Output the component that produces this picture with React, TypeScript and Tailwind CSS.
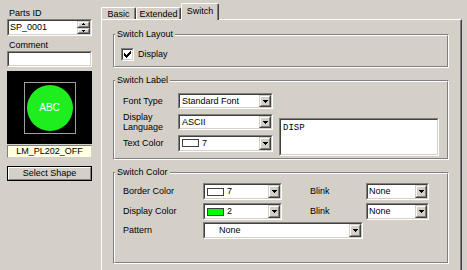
import React from "react";

const SUNK_OUT = "border border-t-[#808080] border-l-[#808080] border-r-white border-b-white";
const SUNK_IN = "border border-t-[#404040] border-l-[#404040] border-r-[#d4d0c8] border-b-[#d4d0c8]";
const RAISE_OUT = "border border-t-[#d4d0c8] border-l-[#d4d0c8] border-r-[#404040] border-b-[#404040]";
const RAISE_IN = "border border-t-white border-l-white border-r-[#808080] border-b-[#808080]";

function DownArrow() {
  return (
    <svg width="5" height="3" viewBox="0 0 5 3" shapeRendering="crispEdges">
      <rect x="0" y="0" width="5" height="1" fill="#000" />
      <rect x="1" y="1" width="3" height="1" fill="#000" />
      <rect x="2" y="2" width="1" height="1" fill="#000" />
    </svg>
  );
}

function UpArrowSmall() {
  return (
    <svg width="3" height="2" viewBox="0 0 3 2" shapeRendering="crispEdges">
      <rect x="1" y="0" width="1" height="1" fill="#000" />
      <rect x="0" y="1" width="3" height="1" fill="#000" />
    </svg>
  );
}
function DownArrowSmall() {
  return (
    <svg width="3" height="2" viewBox="0 0 3 2" shapeRendering="crispEdges">
      <rect x="0" y="0" width="3" height="1" fill="#000" />
      <rect x="1" y="1" width="1" height="1" fill="#000" />
    </svg>
  );
}

function ArrowButton() {
  return (
    <div className={`${RAISE_OUT} w-[12px] h-full bg-[#d4d0c8] shrink-0`}>
      <div className={`${RAISE_IN} h-full flex items-center justify-center`}>
        <DownArrow />
      </div>
    </div>
  );
}

function Combo({ className, children }: { className: string; children: React.ReactNode }) {
  return (
    <div className={`${SUNK_OUT} ${className} shrink-0`}>
      <div className={`${SUNK_IN} h-full flex bg-white`}>
        <div className="flex-1 flex items-center overflow-hidden whitespace-nowrap">{children}</div>
        <ArrowButton />
      </div>
    </div>
  );
}

function Swatch({ color }: { color: string }) {
  return (
    <span
      className={`ml-[2px] w-[17px] h-[8px] border border-[#404040] shrink-0 ${color === "green" ? "bg-[#00ff00]" : "bg-white"}`}
    />
  );
}

function Group({ title, className, children }: { title: string; className: string; children: React.ReactNode }) {
  return (
    <div className={`relative border border-t-[#808080] border-l-[#808080] border-r-white border-b-white ${className}`}>
      <div className="h-full border border-t-white border-l-white border-r-[#808080] border-b-[#808080]">{children}</div>
      <span className="absolute left-[1px] -top-[6px] px-[2px] bg-[#d4d0c8] leading-[11px]">{title}</span>
    </div>
  );
}

function Checkbox() {
  return (
    <div className={`${SUNK_OUT} w-[13px] h-[13px] shrink-0`}>
      <div className={`${SUNK_IN} h-full bg-white flex items-center justify-center`}>
        <svg width="7" height="7" viewBox="0 0 7 7" shapeRendering="crispEdges">
          <rect x="0" y="2" width="1" height="3" fill="#000" />
          <rect x="1" y="3" width="1" height="3" fill="#000" />
          <rect x="2" y="4" width="1" height="3" fill="#000" />
          <rect x="3" y="3" width="1" height="3" fill="#000" />
          <rect x="4" y="2" width="1" height="3" fill="#000" />
          <rect x="5" y="1" width="1" height="3" fill="#000" />
          <rect x="6" y="0" width="1" height="3" fill="#000" />
        </svg>
      </div>
    </div>
  );
}

function LeftPanel() {
  return (
    <div className="w-[101px] shrink-0 pl-[7px] flex flex-col">
      <div className="mt-[8px] pl-[2px] h-[11px]">Parts ID</div>
      <div className={`${SUNK_OUT} w-[85px] h-[17px]`}>
        <div className={`${SUNK_IN} h-full bg-white flex`}>
          <div className="flex-1 pl-[1px] flex items-center">SP_0001</div>
          <div className="w-[13px] h-full flex flex-col shrink-0">
            <div className={`${RAISE_OUT} flex-1 bg-[#d4d0c8]`}>
              <div className={`${RAISE_IN} h-full flex items-center justify-center`}>
                <UpArrowSmall />
              </div>
            </div>
            <div className={`${RAISE_OUT} flex-1 bg-[#d4d0c8]`}>
              <div className={`${RAISE_IN} h-full flex items-center justify-center`}>
                <DownArrowSmall />
              </div>
            </div>
          </div>
        </div>
      </div>
      <div className="mt-[4px] pl-[2px] h-[11px]">Comment</div>
      <div className={`${SUNK_OUT} w-[85px] h-[16px]`}>
        <div className={`${SUNK_IN} h-full bg-white`} />
      </div>
      <div className="mt-[4px] w-[85px] h-[73px] bg-black flex items-center justify-center">
        <div className="w-[52px] h-[52px] border border-[#a0a0a0] flex items-center justify-center">
          <div className="w-[46px] h-[46px] rounded-full bg-[#1eee1e] flex items-center justify-center text-white text-[10px]">
            ABC
          </div>
        </div>
      </div>
      <div className="mt-[1px] w-[85px] h-[13px] bg-[#ffffe1] border border-t-[#808080] border-l-[#808080] border-r-[#d4d0c8] border-b-[#d4d0c8] flex items-center justify-center">
        LM_PL202_OFF
      </div>
      <div className="mt-[8px] w-[85px] h-[15px] border border-black">
        <div className={`${RAISE_IN} h-full bg-[#d4d0c8] flex items-center justify-center`}>Select Shape</div>
      </div>
    </div>
  );
}

function Tab({ label, className }: { label: string; className: string }) {
  return (
    <div
      className={`border-l border-t border-l-white border-t-white border-r border-r-[#404040] shadow-[inset_-1px_0_#808080] rounded-tl-[2px] rounded-tr-[2px] bg-[#d4d0c8] flex items-center justify-center ${className}`}
    >
      {label}
    </div>
  );
}

function RightPanel() {
  return (
    <div className="w-[361px] shrink-0 flex flex-col">
      <div className="h-[19px] pt-[3px] flex items-end">
        <Tab label="Basic" className="w-[35px] h-[12px] pt-[1px]" />
        <Tab label="Extended" className="w-[45px] h-[12px] pt-[1px]" />
        <Tab label="Switch" className="w-[38px] h-[17px] -mb-[1px] relative z-10 pb-[2px]" />
      </div>
      <div className="flex-1 border-l border-t border-l-white border-t-white border-r border-r-[#404040] shadow-[inset_-1px_0_#808080] pl-[11px] pr-[12px] pt-[14px]">
        <Group title="Switch Layout" className="h-[34px]">
          <div className="pt-[12px] pl-[6px] flex items-center">
            <Checkbox />
            <span className="ml-[4px]">Display</span>
          </div>
        </Group>

        <Group title="Switch Label" className="mt-[12px] h-[80px]">
          <div className="pt-[11px] pl-[8px] flex items-start">
            <div className="flex flex-col gap-[5px]">
              <div className="flex items-center h-[16px]">
                <span className="w-[55px]">Font Type</span>
                <Combo className="w-[95px] h-[16px]">
                  <span className="pl-[2px]">Standard Font</span>
                </Combo>
              </div>
              <div className="flex items-center h-[16px]">
                <span className="w-[55px] leading-[10px]">
                  Display
                  <br />
                  Language
                </span>
                <Combo className="w-[95px] h-[16px]">
                  <span className="pl-[2px]">ASCII</span>
                </Combo>
              </div>
              <div className="flex items-center h-[16px]">
                <span className="w-[55px]">Text Color</span>
                <Combo className="w-[95px] h-[17px]">
                  <Swatch color="white" />
                  <span className="ml-[3px]">7</span>
                </Combo>
              </div>
            </div>
            <div className={`${SUNK_OUT} ml-[6px] mt-[25px] w-[160px] h-[38px]`}>
              <div className={`${SUNK_IN} h-full bg-white pl-[2px] pt-[3px] font-[family-name:Liberation_Mono,Courier_New,monospace] text-[9px]`}>
                DISP
              </div>
            </div>
          </div>
        </Group>

        <Group title="Switch Color" className="mt-[12px] h-[92px]">
          <div className="pt-[9px] pl-[8px] flex flex-col">
            <div className="flex items-center h-[17px]">
              <span className="w-[80px]">Border Color</span>
              <Combo className="w-[79px] h-[17px]">
                <Swatch color="white" />
                <span className="ml-[3px]">7</span>
              </Combo>
              <span className="ml-[28px] w-[56px]">Blink</span>
              <Combo className="w-[63px] h-[17px]">
                <span className="pl-[1px]">None</span>
              </Combo>
            </div>
            <div className="mt-[3px] flex items-center h-[17px]">
              <span className="w-[80px]">Display Color</span>
              <Combo className="w-[79px] h-[17px]">
                <Swatch color="green" />
                <span className="ml-[3px]">2</span>
              </Combo>
              <span className="ml-[28px] w-[56px]">Blink</span>
              <Combo className="w-[63px] h-[17px]">
                <span className="pl-[1px]">None</span>
              </Combo>
            </div>
            <div className="mt-[2px] flex items-center h-[17px]">
              <span className="w-[80px]">Pattern</span>
              <Combo className="w-[160px] h-[17px]">
                <span className="pl-[14px]">None</span>
              </Combo>
            </div>
          </div>
        </Group>
      </div>
    </div>
  );
}

export default function App() {
  return (
    <div className="w-[467px] h-[270px] overflow-hidden bg-[#d4d0c8] flex text-[9px] leading-[11px] text-black font-[family-name:Liberation_Sans,Arial,sans-serif]">
      <LeftPanel />
      <RightPanel />
    </div>
  );
}
